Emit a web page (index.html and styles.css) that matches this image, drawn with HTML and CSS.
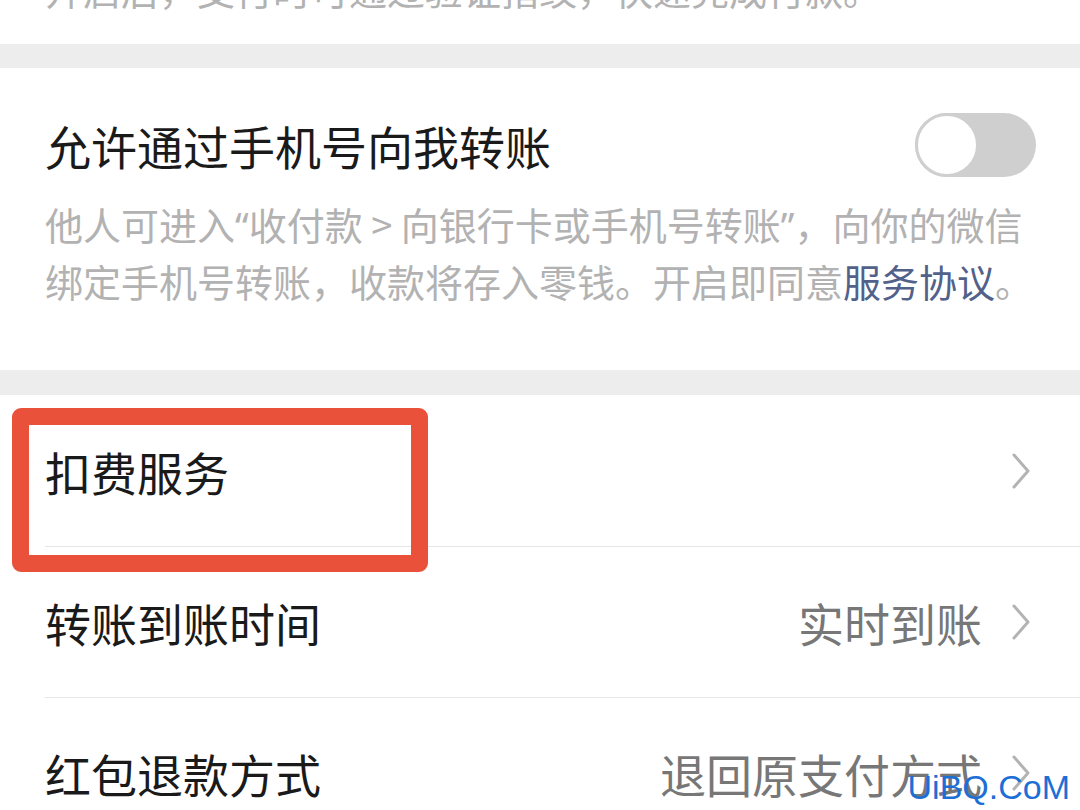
FILE: index.html
```html
<!DOCTYPE html>
<html lang="zh-CN">
<head>
    <meta charset="UTF-8">
    <meta name="viewport" content="width=device-width, initial-scale=1.0">
    <title>支付设置</title>
    <link rel="stylesheet" href="styles.css">
</head>
<body>
    <div class="page">
        <div class="group group-top">
            <p class="desc">开启后，支付时可通过验证指纹，快速完成付款。</p>
        </div>

        <div class="group group-phone">
            <div class="switch-row">
                <span class="title">允许通过手机号向我转账</span>
                <span class="switch"><span class="knob"></span></span>
            </div>
            <p class="desc">他人可进入<span class="q">“</span>收付款 &gt; 向银行卡或手机号转账<span class="q">”</span>，向你的微信<br>绑定手机号转账，收款将存入零钱。开启即同意<span class="link">服务协议</span>。</p>
        </div>

        <div class="group group-list">
            <div class="cell">
                <span class="title">扣费服务</span>
                <span class="extra">
                    <svg class="arrow" width="20" height="36" viewBox="0 0 20 36"><polyline points="3,2 17,18 3,34" fill="none" stroke="#b3b3b3" stroke-width="3" stroke-linecap="round" stroke-linejoin="round"/></svg>
                </span>
            </div>
            <div class="cell">
                <span class="title">转账到账时间</span>
                <span class="extra">
                    <span class="value">实时到账</span>
                    <svg class="arrow" width="20" height="36" viewBox="0 0 20 36"><polyline points="3,2 17,18 3,34" fill="none" stroke="#b3b3b3" stroke-width="3" stroke-linecap="round" stroke-linejoin="round"/></svg>
                </span>
            </div>
            <div class="cell">
                <span class="title">红包退款方式</span>
                <span class="extra">
                    <span class="value">退回原支付方式</span>
                    <svg class="arrow" width="20" height="36" viewBox="0 0 20 36"><polyline points="3,2 17,18 3,34" fill="none" stroke="#b3b3b3" stroke-width="3" stroke-linecap="round" stroke-linejoin="round"/></svg>
                </span>
            </div>
        </div>

        <!-- пометка поверх строки -->
        <div class="mark"></div>
        <div class="watermark">UiBQ.CoM</div>
    </div>
</body>
</html>
```

FILE: styles.css
```css
body {
    margin: 0;
    padding: 0;
    background: #ededed;
    font-family: "Noto Sans CJK SC", "Noto Sans", sans-serif;
    color: #1a1a1a;
}

.page {
    position: relative;
    width: 1080px;
    height: 810px;
    overflow: hidden;
}

.group {
    background: #fff;
}

.group-top {
    margin-top: -40px;
    padding: 0 45px 27px;
}

.group-phone {
    margin-top: 24px;
    padding: 45px 44px 62px 45px;
}

.group-list {
    margin-top: 25px;
}

.desc {
    margin: 0;
    font-size: 38px;
    line-height: 57px;
    color: #b2b2b2;
    white-space: nowrap;
}

.desc .q {
    font-family: "Noto Sans", sans-serif;
}

.group-phone .desc {
    margin-top: 19px;
    line-height: 55px;
}

.link {
    color: #52618a;
}

.title {
    font-size: 46px;
    line-height: 64px;
}

.switch-row {
    display: flex;
    justify-content: space-between;
    align-items: center;
}

.switch {
    position: relative;
    width: 121px;
    height: 64px;
    border-radius: 32px;
    background: #cfcfcf;
}

.knob {
    position: absolute;
    left: 0;
    top: 0;
    width: 58px;
    height: 58px;
    border-radius: 50%;
    background: #fff;
    border: 3px solid #cfcfcf;
}

.cell {
    display: flex;
    justify-content: space-between;
    align-items: center;
    height: 150px;
    padding: 0 49px 0 45px;
}

.cell + .cell {
    border-top: 1px solid #e6e6e6;
    margin-left: 45px;
    padding-left: 0;
}

.cell:first-child {
    height: 151px;
}

.extra {
    display: flex;
    align-items: center;
    gap: 29px;
}

.value {
    font-size: 46px;
    line-height: 64px;
    color: #777;
}

.arrow {
    display: block;
}

.mark {
    position: absolute;
    left: 12px;
    top: 408px;
    width: 382px;
    height: 130px;
    border: 17px solid #e9513b;
    border-radius: 9px;
}

.watermark {
    position: absolute;
    right: 10px;
    bottom: 3px;
    font-family: "Liberation Sans", Arial, sans-serif;
    font-size: 34px;
    color: #1d6fd6;
}
```
